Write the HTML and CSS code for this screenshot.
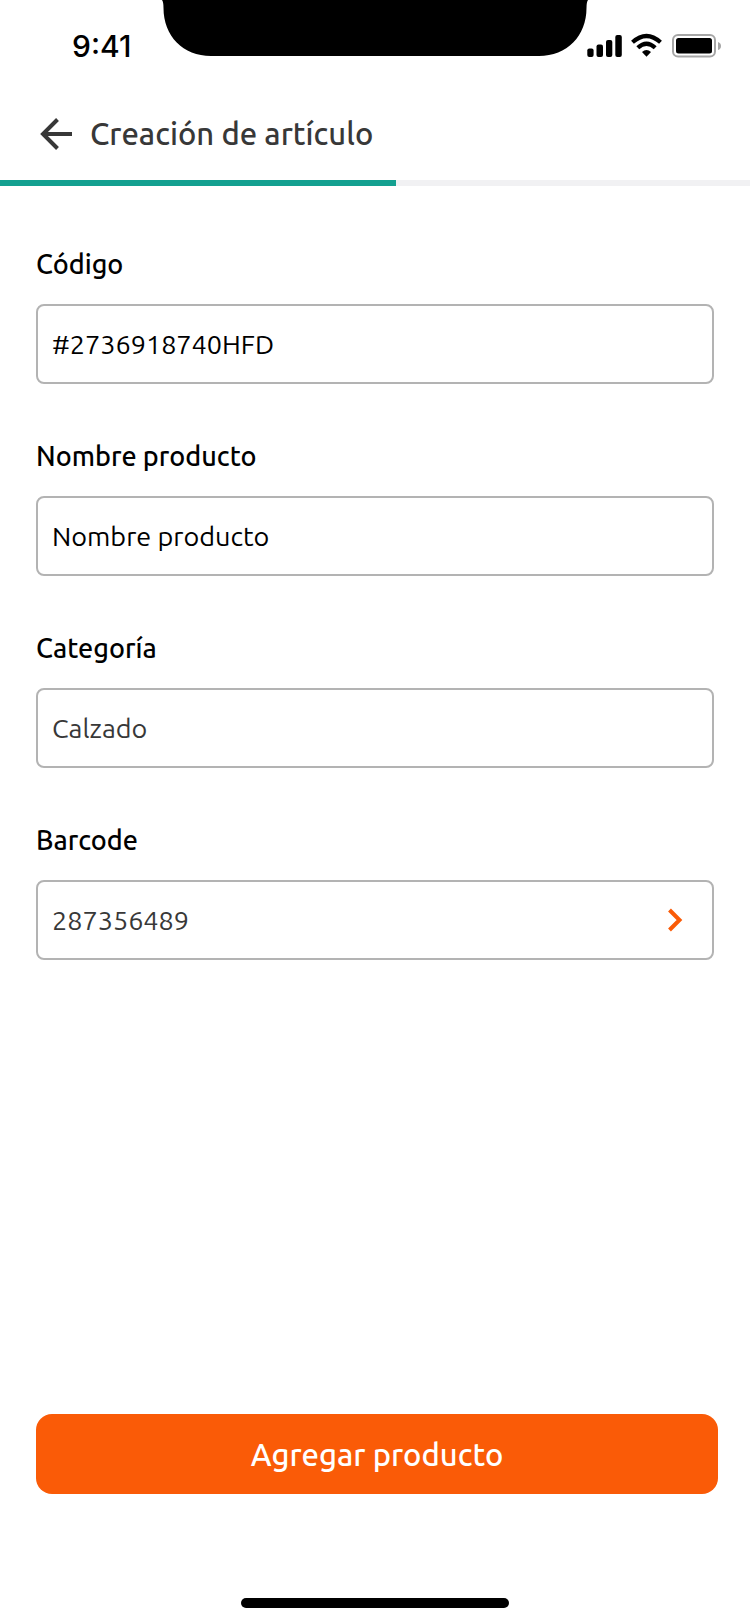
FILE: index.html
```html
<!DOCTYPE html>
<html lang="es">
<head>
  <meta charset="utf-8">
  <meta name="viewport" content="width=device-width, initial-scale=1">
  <title>Creación de artículo</title>
  <link rel="stylesheet" href="styles.css">
</head>
<body>
  <div class="screen">
    <div class="status-bar">
      <time class="clock">9:41</time>
      <svg class="notch" width="428" height="56" viewBox="0 0 428 56" aria-hidden="true">
        <path d="M1 0Q2.500 2 2.500 8C2.500 36 22 56 50 56H378C406 56 425.500 36 425.500 8Q425.500 2 427 0Z"/>
      </svg>
      <svg class="status-icons" width="136" height="26" viewBox="0 0 136 26" aria-hidden="true">
        <rect x="1.300" y="15.500" width="6.300" height="8.500" rx="2"/>
        <rect x="10.500" y="11.500" width="6.500" height="12.500" rx="2"/>
        <rect x="20" y="7" width="6.300" height="17" rx="2"/>
        <rect x="29.300" y="2" width="6.500" height="22" rx="2"/>
        <g fill="none" stroke="#000" stroke-width="4.200">
          <path d="M46.500 9.300Q60.500 -3.300 74.500 9.300"/>
          <path d="M51.800 14.800Q60.500 6.700 69.200 14.800"/>
        </g>
        <path d="M56 19Q60.500 15 65 19L60.500 23.800Z"/>
        <rect x="87" y="2" width="42" height="21.500" rx="5" fill="none" stroke="#a6a6a6" stroke-width="2"/>
        <rect x="90" y="5" width="36" height="15.500" rx="2.500"/>
        <path d="M132 9Q135 10 135 13T132 17Z" fill="#a6a6a6"/>
      </svg>
    </div>

    <header class="header">
      <button class="back" type="button" aria-label="Volver">
        <svg width="32" height="32" viewBox="0 0 32 32" fill="none" stroke="#383838" stroke-width="4" aria-hidden="true">
          <path d="M32 16H3M17.500 1.500L3 16L17.500 30.500"/>
        </svg>
      </button>
      <h1 class="title">Creación de artículo</h1>
    </header>
    <div class="progress" role="progressbar" aria-label="Progreso" aria-valuenow="53" aria-valuemin="0" aria-valuemax="100">
      <div class="progress-fill"></div>
    </div>

    <form class="form">
      <div class="field">
        <label class="label" for="codigo">Código</label>
        <div class="box"><input class="input" id="codigo" type="text" value="#2736918740HFD"></div>
      </div>
      <div class="field">
        <label class="label" for="nombre">Nombre producto</label>
        <div class="box"><input class="input" id="nombre" type="text" value="Nombre producto"></div>
      </div>
      <div class="field">
        <label class="label" for="categoria">Categoría</label>
        <div class="box"><input class="input input-soft" id="categoria" type="text" value="Calzado"></div>
      </div>
      <div class="field">
        <label class="label" for="barcode">Barcode</label>
        <div class="box">
          <input class="input input-soft" id="barcode" type="text" value="287356489">
          <button class="open" type="button" aria-label="Abrir barcode">
            <svg width="16" height="24" viewBox="0 0 16 24" fill="none" stroke="#fa5b07" stroke-width="4" aria-hidden="true">
              <path d="M1.500 2L11.500 12L1.500 22"/>
            </svg>
          </button>
        </div>
      </div>
      <button class="submit" type="submit">Agregar producto</button>
    </form>
    <div class="home-indicator"></div>
  </div>
</body>
</html>
```

FILE: styles.css
```css
* {
  box-sizing: border-box;
}

body {
  margin: 0;
  background: #fff;
  color: #000;
  font-family: Ubuntu, "Noto Sans", sans-serif;
}

button,
input {
  font: inherit;
  border: 0;
  padding: 0;
  background: none;
}

button {
  cursor: pointer;
}

svg {
  display: block;
}

.screen {
  display: flex;
  flex-direction: column;
  min-height: 100vh;
}

.status-bar {
  display: grid;
  grid-template-columns: minmax(0, 1fr) auto minmax(0, 1fr);
  height: 88px;
}

.clock {
  padding: 28px 0 0 72px;
  font-family: Inter, sans-serif;
  font-size: 30px;
  font-weight: 500;
  line-height: 36px;
}

.status-icons {
  justify-self: end;
  margin: 33px 28px 0 0;
}

.header {
  display: flex;
  align-items: center;
  gap: 18px;
  height: 92px;
  padding: 0 40px;
}

.title {
  margin: 0;
  color: #383838;
  font-size: 31px;
  font-weight: 500;
  line-height: 40px;
}

.progress {
  height: 6px;
  background: #f1f1f3;
}

.progress-fill {
  width: 52.8%;
  height: 100%;
  background: #14a090;
}

.form {
  display: flex;
  flex: 1;
  flex-direction: column;
  gap: 56px;
  padding: 62px 32px 104px 36px;
}

.field {
  display: flex;
  flex-direction: column;
  gap: 24px;
  padding-right: 4px;
}

.label {
  font-size: 27px;
  font-weight: 500;
  line-height: 32px;
}

.box {
  display: flex;
  align-items: center;
  height: 80px;
  padding: 0 28px 0 14px;
  border: 2px solid #b3b3b3;
  border-radius: 8px;
}

.input {
  flex: 1;
  min-width: 0;
  height: 100%;
  font-size: 27px;
  outline: 0;
}

.input-soft {
  color: #383838;
}

.submit {
  height: 80px;
  margin-top: auto;
  border-radius: 16px;
  background: #fa5b07;
  color: #fff;
  font-size: 31px;
  font-weight: 500;
}

.home-indicator {
  width: 268px;
  height: 10px;
  margin: 0 auto 16px;
  border-radius: 5px;
  background: #000;
}
```
